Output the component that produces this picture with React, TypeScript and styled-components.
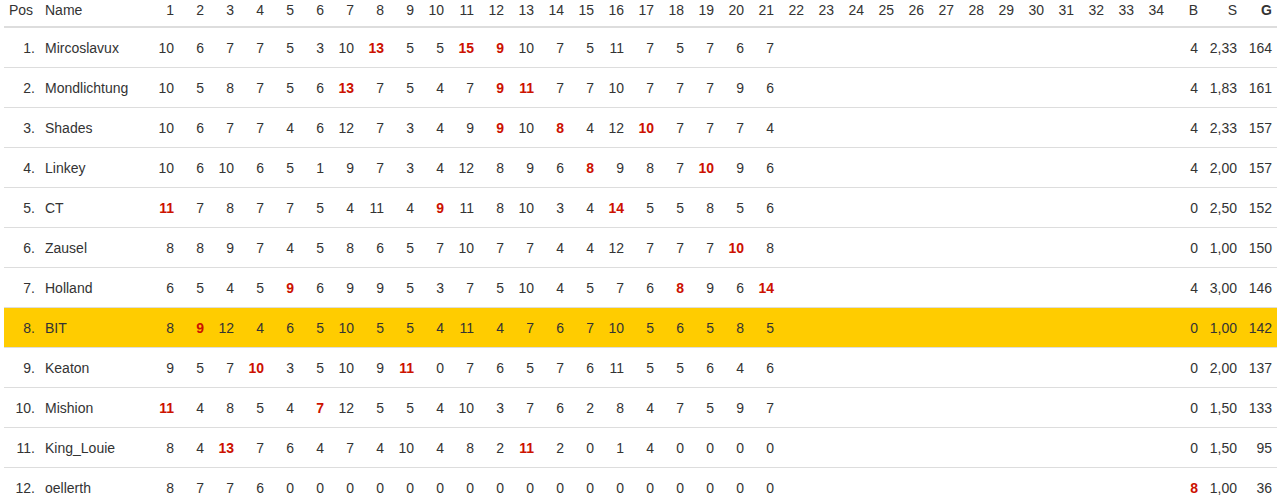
import React from "react";
import styled, { createGlobalStyle } from "styled-components";

const GlobalStyle = createGlobalStyle`
  body {
    margin: 0;
    background: #fff;
    font-family: "Liberation Sans", Arial, Helvetica, sans-serif;
    font-size: 14px;
    color: #333;
  }
`;

const Page = styled.div`
  padding: 0 2px 0 4px;
`;

const Table = styled.table`
  width: 1273px;
  table-layout: fixed;
  border-collapse: collapse;
  border-spacing: 0;
`;

const HeadCell = styled.th<{ $align?: "left" | "right"; $bold?: boolean }>`
  padding: 0 5px 6px;
  line-height: 20px;
  font-weight: ${(p) => (p.$bold ? "bold" : "normal")};
  text-align: ${(p) => p.$align || "right"};
  border-bottom: 2px solid #ddd;
  white-space: nowrap;
`;

const Row = styled.tr<{ $mine?: boolean }>`
  background: ${(p) => (p.$mine ? "#ffcc00" : "transparent")};
`;

const Cell = styled.td<{ $align?: "left" | "right"; $best?: boolean }>`
  padding: 10px 5px 8px;
  line-height: 21px;
  text-align: ${(p) => p.$align || "right"};
  border-top: 1px solid #ddd;
  white-space: nowrap;
  font-weight: ${(p) => (p.$best ? "bold" : "normal")};
  color: ${(p) => (p.$best ? "#cc1100" : "inherit")};
`;

type Player = { name: string; rounds: number[]; b: number; s: string; g: number };

const players: Player[] = [
  { name: "Mircoslavux", rounds: [10, 6, 7, 7, 5, 3, 10, 13, 5, 5, 15, 9, 10, 7, 5, 11, 7, 5, 7, 6, 7], b: 4, s: "2,33", g: 164 },
  { name: "Mondlichtung", rounds: [10, 5, 8, 7, 5, 6, 13, 7, 5, 4, 7, 9, 11, 7, 7, 10, 7, 7, 7, 9, 6], b: 4, s: "1,83", g: 161 },
  { name: "Shades", rounds: [10, 6, 7, 7, 4, 6, 12, 7, 3, 4, 9, 9, 10, 8, 4, 12, 10, 7, 7, 7, 4], b: 4, s: "2,33", g: 157 },
  { name: "Linkey", rounds: [10, 6, 10, 6, 5, 1, 9, 7, 3, 4, 12, 8, 9, 6, 8, 9, 8, 7, 10, 9, 6], b: 4, s: "2,00", g: 157 },
  { name: "CT", rounds: [11, 7, 8, 7, 7, 5, 4, 11, 4, 9, 11, 8, 10, 3, 4, 14, 5, 5, 8, 5, 6], b: 0, s: "2,50", g: 152 },
  { name: "Zausel", rounds: [8, 8, 9, 7, 4, 5, 8, 6, 5, 7, 10, 7, 7, 4, 4, 12, 7, 7, 7, 10, 8], b: 0, s: "1,00", g: 150 },
  { name: "Holland", rounds: [6, 5, 4, 5, 9, 6, 9, 9, 5, 3, 7, 5, 10, 4, 5, 7, 6, 8, 9, 6, 14], b: 4, s: "3,00", g: 146 },
  { name: "BIT", rounds: [8, 9, 12, 4, 6, 5, 10, 5, 5, 4, 11, 4, 7, 6, 7, 10, 5, 6, 5, 8, 5], b: 0, s: "1,00", g: 142 },
  { name: "Keaton", rounds: [9, 5, 7, 10, 3, 5, 10, 9, 11, 0, 7, 6, 5, 7, 6, 11, 5, 5, 6, 4, 6], b: 0, s: "2,00", g: 137 },
  { name: "Mishion", rounds: [11, 4, 8, 5, 4, 7, 12, 5, 5, 4, 10, 3, 7, 6, 2, 8, 4, 7, 5, 9, 7], b: 0, s: "1,50", g: 133 },
  { name: "King_Louie", rounds: [8, 4, 13, 7, 6, 4, 7, 4, 10, 4, 8, 2, 11, 2, 0, 1, 4, 0, 0, 0, 0], b: 0, s: "1,50", g: 95 },
  { name: "oellerth", rounds: [8, 7, 7, 6, 0, 0, 0, 0, 0, 0, 0, 0, 0, 0, 0, 0, 0, 0, 0, 0, 0], b: 8, s: "1,00", g: 36 },
];

const ROUNDS = 34;
const roundNums = Array.from({ length: ROUNDS }, (_, i) => i + 1);
const best = roundNums.map((_, i) => Math.max(...players.map((p) => p.rounds[i] ?? -1)));
const bestB = Math.max(...players.map((p) => p.b));

export default function App() {
  return (
    <Page>
      <GlobalStyle />
      <Table>
        <colgroup>
          <col style={{ width: 36 }} />
          <col style={{ width: 109 }} />
          {roundNums.map((n) => (
            <col key={n} style={{ width: 30 }} />
          ))}
          <col style={{ width: 34 }} />
          <col style={{ width: 39 }} />
          <col style={{ width: 35 }} />
        </colgroup>
        <thead>
          <tr>
            <HeadCell $align="left">Pos</HeadCell>
            <HeadCell $align="left">Name</HeadCell>
            {roundNums.map((n) => (
              <HeadCell key={n}>{n}</HeadCell>
            ))}
            <HeadCell>B</HeadCell>
            <HeadCell>S</HeadCell>
            <HeadCell $bold>G</HeadCell>
          </tr>
        </thead>
        <tbody>
          {players.map((p, idx) => (
            <Row key={p.name} $mine={p.name === "BIT"}>
              <Cell>{idx + 1}.</Cell>
              <Cell $align="left">{p.name}</Cell>
              {roundNums.map((n, i) => {
                const v = p.rounds[i];
                return (
                  <Cell key={n} $best={v !== undefined && v === best[i]}>
                    {v ?? ""}
                  </Cell>
                );
              })}
              <Cell $best={p.b === bestB}>{p.b}</Cell>
              <Cell>{p.s}</Cell>
              <Cell>{p.g}</Cell>
            </Row>
          ))}
        </tbody>
      </Table>
    </Page>
  );
}
